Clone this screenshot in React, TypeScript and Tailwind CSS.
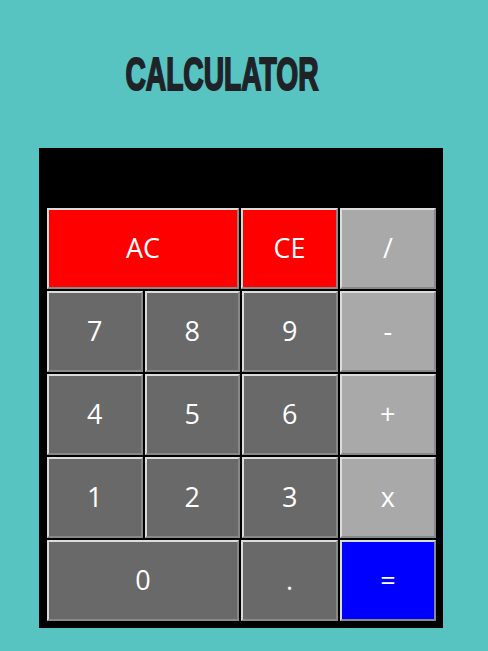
const keys = [
  [
    { label: "AC", w: "w-[192px]", color: "bg-[#ff0000]" },
    { label: "CE", w: "w-[97px]", color: "bg-[#ff0000]" },
    { label: "/", w: "w-[96px]", color: "bg-[#a9a9a9]" },
  ],
  [
    { label: "7", w: "w-[96px]", color: "bg-[#696969]" },
    { label: "8", w: "w-[96px]", color: "bg-[#696969]" },
    { label: "9", w: "w-[96px]", color: "bg-[#696969]" },
    { label: "-", w: "w-[97px]", color: "bg-[#a9a9a9]" },
  ],
  [
    { label: "4", w: "w-[96px]", color: "bg-[#696969]" },
    { label: "5", w: "w-[96px]", color: "bg-[#696969]" },
    { label: "6", w: "w-[96px]", color: "bg-[#696969]" },
    { label: "+", w: "w-[97px]", color: "bg-[#a9a9a9]" },
  ],
  [
    { label: "1", w: "w-[96px]", color: "bg-[#696969]" },
    { label: "2", w: "w-[96px]", color: "bg-[#696969]" },
    { label: "3", w: "w-[96px]", color: "bg-[#696969]" },
    { label: "x", w: "w-[97px]", color: "bg-[#a9a9a9]" },
  ],
  [
    { label: "0", w: "w-[192px]", color: "bg-[#696969]" },
    { label: ".", w: "w-[97px]", color: "bg-[#696969]" },
    { label: "=", w: "w-[96px]", color: "bg-[#0000ff]" },
  ],
];

const App = () => {
  return (
    <div className="min-h-[651px] w-full bg-[#58c4c2] pt-[47px]">
      <div className="flex justify-center pr-[44px]">
        <h1 className="text-[47px] leading-[54px] font-bold text-[#1f2328] scale-x-[0.6] [-webkit-text-stroke:2px_#1f2328] font-['Liberation_Sans_Narrow','Liberation_Sans',sans-serif]">
          CALCULATOR
        </h1>
      </div>
      <div className="ml-[39px] mt-[47px] w-[404px] bg-black pl-[8px] pr-[7px] pb-[7px]">
        <div className="h-[60px]" />
        <div className="flex flex-col gap-[2px]">
          {keys.map((row, i) => (
            <div key={i} className="flex gap-[2px]">
              {row.map((k) => (
                <button
                  key={k.label}
                  className={`${k.w} ${k.color} h-[81px] border-2 border-t-[#dcdcdc] border-l-[#dcdcdc] border-b-[#888888] border-r-[#888888] text-white text-[27px] font-['Open_Sans',sans-serif]`}
                >
                  {k.label}
                </button>
              ))}
            </div>
          ))}
        </div>
      </div>
    </div>
  );
};

export default App;
